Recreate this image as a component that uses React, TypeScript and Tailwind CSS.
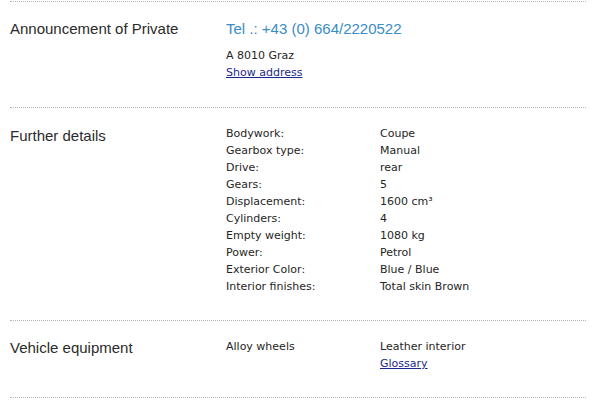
const details: [string, string][] = [
  ["Bodywork:", "Coupe"],
  ["Gearbox type:", "Manual"],
  ["Drive:", "rear"],
  ["Gears:", "5"],
  ["Displacement:", "1600 cm³"],
  ["Cylinders:", "4"],
  ["Empty weight:", "1080 kg"],
  ["Power:", "Petrol"],
  ["Exterior Color:", "Blue / Blue"],
  ["Interior finishes:", "Total skin Brown"],
];

const heading = "text-[15px] leading-5 text-[#2b2b2b] font-['Liberation_Sans',Arial,sans-serif]";
const small = "text-[11px] leading-[17px] text-[#262626] font-['DejaVu_Sans',Verdana,sans-serif]";
const link = "block text-[11px] leading-[17px] text-[#1c2a8c] underline font-['DejaVu_Sans',Verdana,sans-serif]";

export default function App() {
  return (
    <div className="w-[600px] h-[400px] bg-white pt-px pl-[10px] pr-[14px] overflow-hidden">
      <section className="grid grid-cols-[216px_154px_1fr] border-t border-dotted border-[#b5b5b5] pt-[17px] pb-[26px]">
        <h2 className={heading}>Announcement of Private</h2>
        <div className="col-span-2 flex flex-col items-start">
          <div className="text-[15px] leading-5 text-[#3a8cc6] font-['Liberation_Sans',Arial,sans-serif]">
            Tel .: +43 (0) 664/2220522
          </div>
          <div className={`${small} mt-2`}>A 8010 Graz</div>
          <a href="#" className={link}>
            Show address
          </a>
        </div>
      </section>

      <section className="grid grid-cols-[216px_154px_1fr] border-t border-dotted border-[#b5b5b5] pt-[17px] pb-[25px]">
        <h2 className={`${heading} mt-px`}>Further details</h2>
        <div className="col-span-2 grid grid-cols-[154px_1fr]">
          {details.map(([k, v]) => (
            <div key={k} className="contents">
              <div className={small}>{k}</div>
              <div className={small}>{v}</div>
            </div>
          ))}
        </div>
      </section>

      <section className="grid grid-cols-[216px_154px_1fr] border-t border-dotted border-[#b5b5b5] pt-[17px] pb-[25px]">
        <h2 className={heading}>Vehicle equipment</h2>
        <div className={small}>Alloy wheels</div>
        <div className="flex flex-col items-start">
          <div className={small}>Leather interior</div>
          <a href="#" className={link}>
            Glossary
          </a>
        </div>
      </section>
      <div className="border-t border-dotted border-[#b5b5b5]" />
    </div>
  );
}
